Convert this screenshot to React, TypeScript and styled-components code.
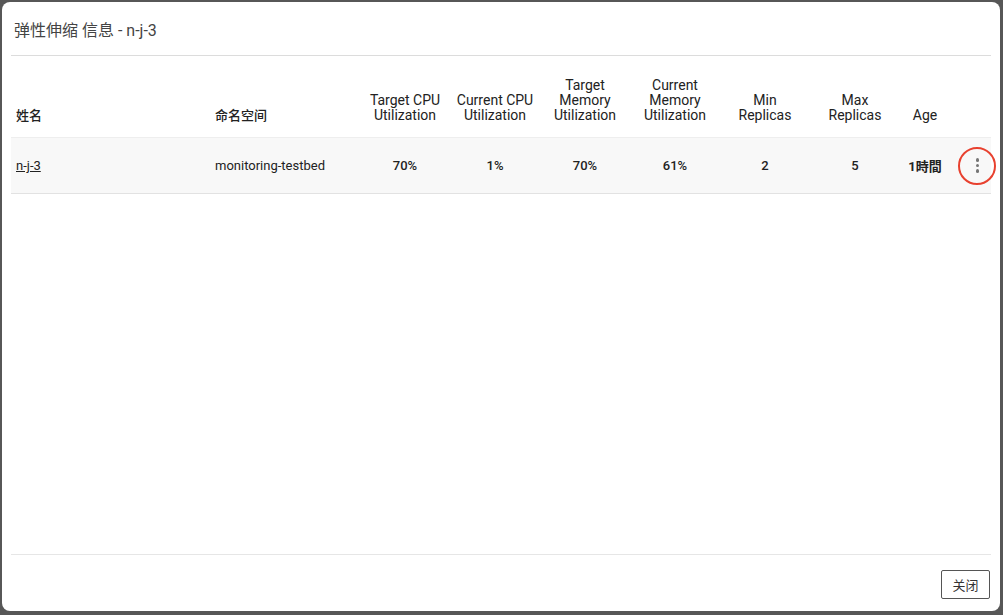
import React from "react";
import styled, { createGlobalStyle } from "styled-components";

const GlobalStyle = createGlobalStyle`
  html, body {
    margin: 0;
    padding: 0;
    background: #575757;
  }
  body {
    font-family: Roboto, "Noto Sans CJK SC", "Noto Sans", sans-serif;
    color: #333;
  }
`;

const Backdrop = styled.div`
  width: 1003px;
  height: 615px;
  box-sizing: border-box;
  padding: 2px 3px 4px 2px;
  background: #575757;
`;

const Modal = styled.div`
  display: flex;
  flex-direction: column;
  height: 100%;
  background: #fff;
  border-radius: 8px;
  padding: 0 9px;
  box-sizing: border-box;
`;

const Title = styled.h2`
  margin: 0;
  padding: 18px 3px 14px;
  font-size: 16px;
  line-height: 21px;
  font-weight: 400;
  color: #444;
  border-bottom: 1px solid #dcdcdc;
`;

const Body = styled.div`
  flex: 1;
`;

const Grid = styled.div`
  display: grid;
  grid-template-columns: 199px 150px repeat(6, 90px) 50px 1fr;
`;

const HeadCell = styled.div<{ $left?: boolean }>`
  height: 82px;
  box-sizing: border-box;
  display: flex;
  align-items: flex-end;
  justify-content: ${(p) => (p.$left ? "flex-start" : "center")};
  text-align: ${(p) => (p.$left ? "left" : "center")};
  padding: 0 5px 14px;
  font-size: ${(p) => (p.$left ? "13px" : "14px")};
  line-height: 15px;
  font-weight: ${(p) => (p.$left ? 500 : 400)};
  color: #222;
  border-bottom: 1px solid #eeeeee;
`;

const Cell = styled.div<{ $left?: boolean; $weight?: number }>`
  height: 56px;
  box-sizing: border-box;
  display: flex;
  align-items: center;
  justify-content: ${(p) => (p.$left ? "flex-start" : "center")};
  padding: 0 5px;
  font-size: 13px;
  font-weight: ${(p) => p.$weight ?? 400};
  color: #222;
  background: #f8f8f8;
  border-bottom: 1px solid #e2e2e2;
`;

const ActionCell = styled(Cell)`
  justify-content: flex-end;
  padding-right: 8px;
  position: relative;
`;

const NameLink = styled.a`
  color: #222;
  text-decoration: underline;
  cursor: pointer;
`;

const Kebab = styled.button`
  display: flex;
  flex-direction: column;
  align-items: center;
  gap: 2px;
  padding: 4px;
  border: none;
  background: none;
  cursor: pointer;

  span {
    width: 3.5px;
    height: 3.5px;
    border-radius: 50%;
    background: #757575;
  }
`;

const Highlight = styled.div`
  position: absolute;
  right: -5px;
  top: 50%;
  width: 34px;
  height: 34px;
  margin-top: -19px;
  border: 2.5px solid #e8412f;
  border-radius: 50%;
  pointer-events: none;
`;

const Footer = styled.div`
  display: flex;
  justify-content: flex-end;
  padding: 15px 1px 12px;
  border-top: 1px solid #e6e6e6;
`;

const CloseButton = styled.button`
  width: 49px;
  height: 29px;
  border: 1px solid #555;
  border-radius: 2px;
  background: #fff;
  font-family: "Noto Sans CJK SC", sans-serif;
  font-size: 13px;
  color: #333;
  cursor: pointer;
`;

const headers: string[][] = [
  ["Target CPU", "Utilization"],
  ["Current CPU", "Utilization"],
  ["Target", "Memory", "Utilization"],
  ["Current", "Memory", "Utilization"],
  ["Min", "Replicas"],
  ["Max", "Replicas"],
];

const values = ["70%", "1%", "70%", "61%", "2", "5"];

const App: React.FC = () => {
  return (
    <>
      <GlobalStyle />
      <Backdrop>
        <Modal>
          <Title>弹性伸缩 信息 - n-j-3</Title>
          <Body>
            <Grid>
              <HeadCell $left>姓名</HeadCell>
              <HeadCell $left>命名空间</HeadCell>
              {headers.map((lines) => (
                <HeadCell key={lines.join(" ")}>
                  <span>
                    {lines.map((l, i) => (
                      <React.Fragment key={l}>
                        {i > 0 && <br />}
                        {l}
                      </React.Fragment>
                    ))}
                  </span>
                </HeadCell>
              ))}
              <HeadCell>Age</HeadCell>
              <HeadCell />

              <Cell $left>
                <NameLink>n-j-3</NameLink>
              </Cell>
              <Cell $left>monitoring-testbed</Cell>
              {values.map((v, i) => (
                <Cell key={i} $weight={500}>
                  {v}
                </Cell>
              ))}
              <Cell $weight={700}>1時間</Cell>
              <ActionCell>
                <Kebab aria-label="actions">
                  <span />
                  <span />
                  <span />
                </Kebab>
                <Highlight />
              </ActionCell>
            </Grid>
          </Body>
          <Footer>
            <CloseButton>关闭</CloseButton>
          </Footer>
        </Modal>
      </Backdrop>
    </>
  );
};

export default App;
